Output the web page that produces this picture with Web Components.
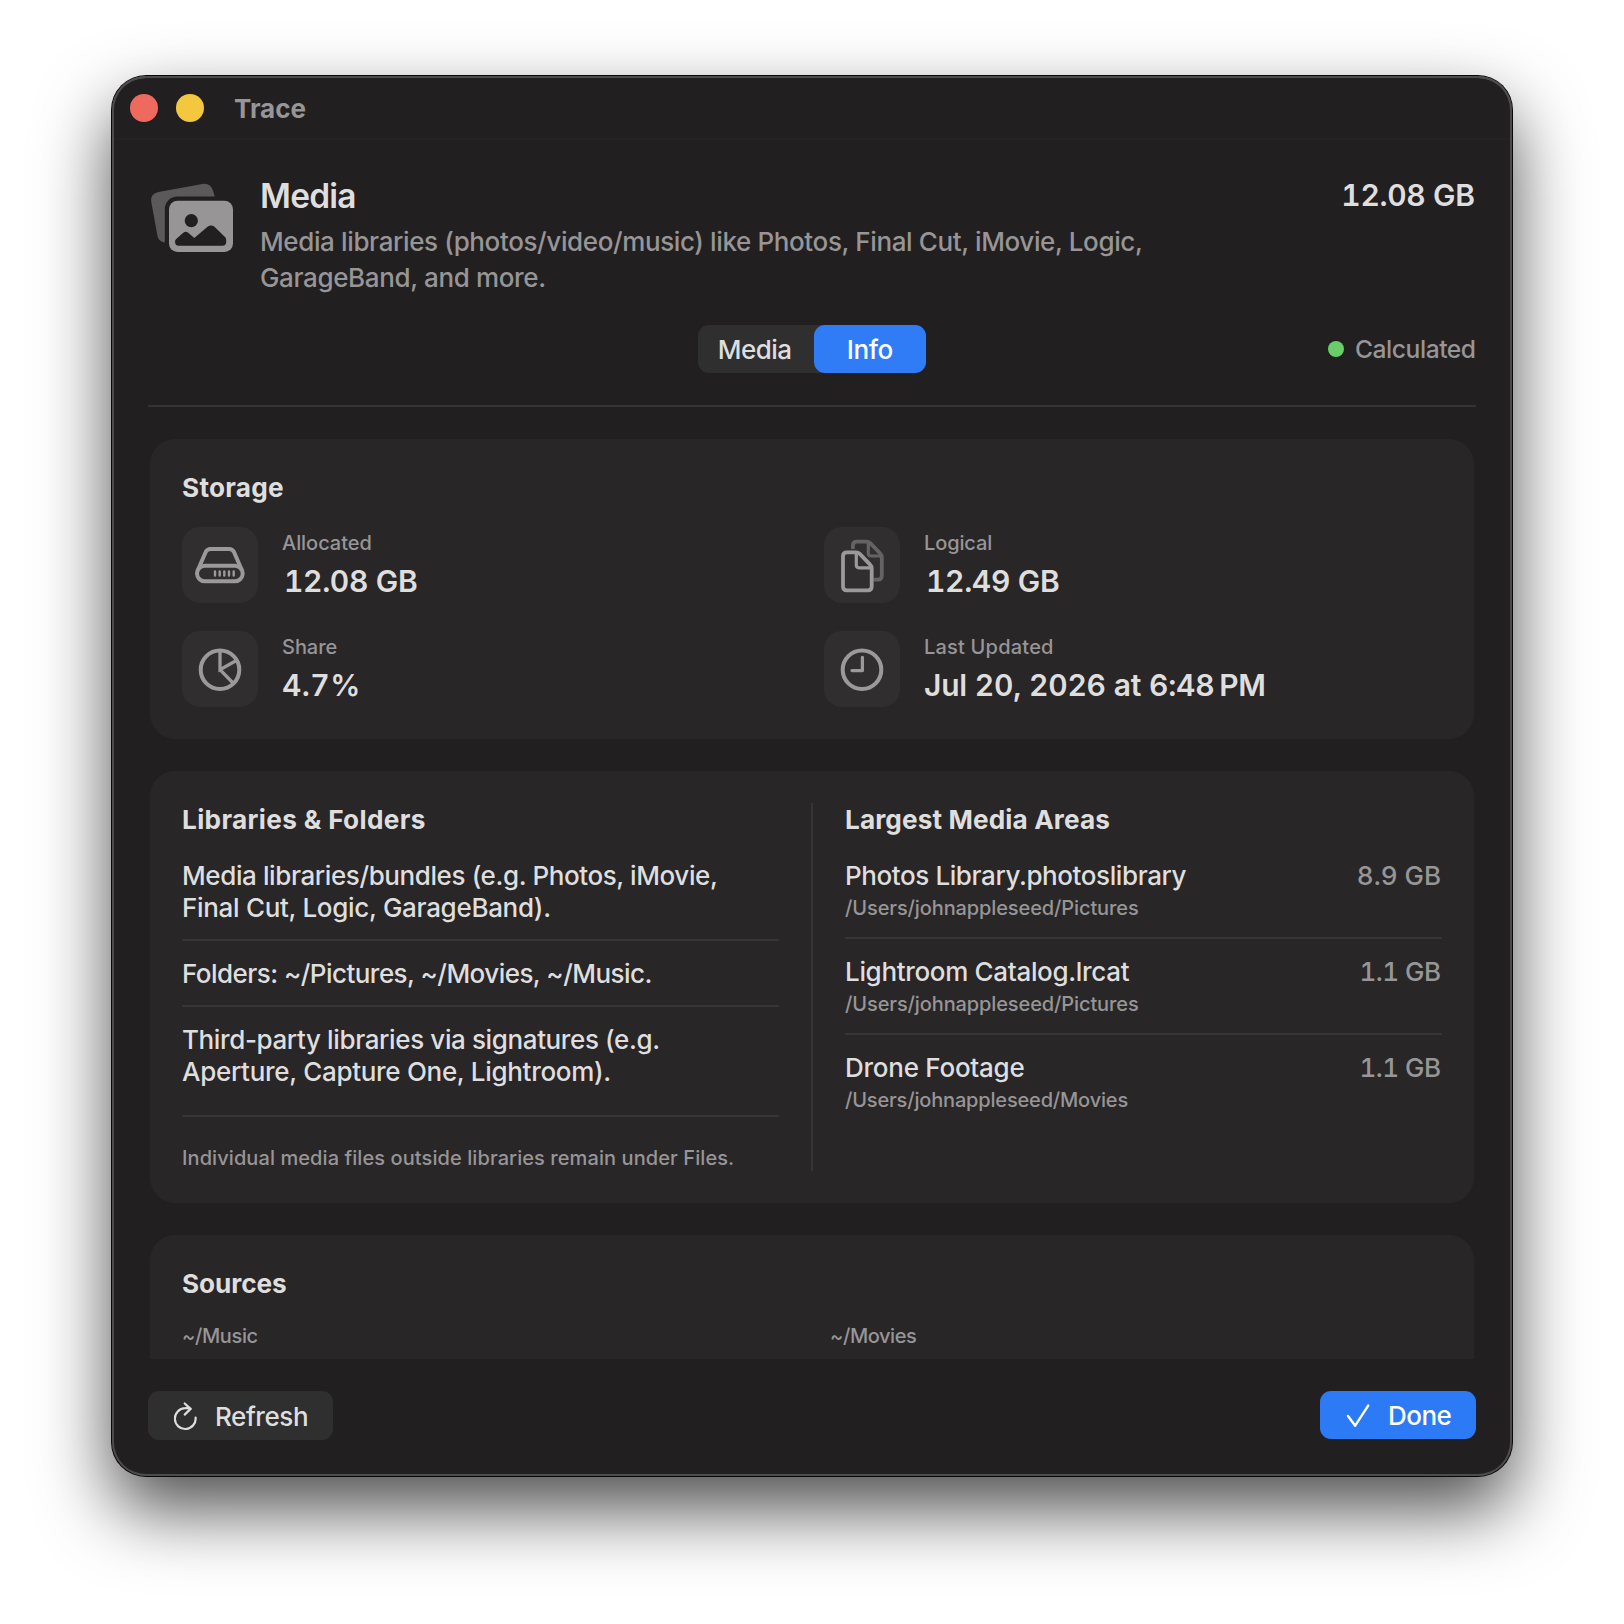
<!DOCTYPE html>
<html lang="en">
<head>
<meta charset="utf-8">
<title>Trace</title>
<style>
  html, body { margin: 0; background: #fff; }
  body {
    width: 1624px; height: 1624px; box-sizing: border-box; padding: 76px 112px; overflow: hidden;
    font-family: Inter, "Liberation Sans", sans-serif;
    --bg: #211f20; --card: #282627; --tile: #302e2f; --line: #373536;
    --hi: #dfdede; --lo: #979596; --blue: #2f7cf6;
    color: var(--hi);
  }
</style>
</head>
<body>
<trace-window heading="Trace">
  <trace-header slot="header">
    <trace-icon slot="icon" name="media" w="88" h="80"></trace-icon>
    <trace-text slot="title" kind="title" fit="92.5">Media</trace-text>
    <trace-text slot="desc" kind="desc" fit="879">Media libraries (photos/video/music) like Photos, Final Cut, iMovie, Logic,</trace-text>
    <trace-text slot="desc" kind="desc" fit="283">GarageBand, and more.</trace-text>
    <trace-text slot="size" kind="value" fit="131.7">12.08 GB</trace-text>
  </trace-header>
  <trace-toolbar slot="header">
    <trace-text slot="tab" kind="body" fit="70.5">Media</trace-text>
    <trace-text slot="active" kind="body" class="white" fit="43.5">Info</trace-text>
    <trace-text slot="status" kind="status" fit="118">Calculated</trace-text>
  </trace-toolbar>

  <trace-card>
    <trace-text kind="head" fit="100">Storage</trace-text>
    <trace-metrics>
      <trace-metric icon="drive"><trace-text slot="label" kind="small" fit="88">Allocated</trace-text><trace-text kind="value" class="num" fit="131.7">12.08 GB</trace-text></trace-metric>
      <trace-metric icon="docs"><trace-text slot="label" kind="small" fit="65.2">Logical</trace-text><trace-text kind="value" class="num" fit="131.7">12.49 GB</trace-text></trace-metric>
      <trace-metric icon="pie"><trace-text slot="label" kind="small" fit="53.4">Share</trace-text><trace-text kind="value" fit="74">4.7%</trace-text></trace-metric>
      <trace-metric icon="clock"><trace-text slot="label" kind="small" fit="126.5">Last Updated</trace-text><trace-text kind="value" fit="339.2">Jul 20, 2026 at 6:48&#x202f;PM</trace-text></trace-metric>
    </trace-metrics>
  </trace-card>

  <trace-card>
    <trace-split>
      <trace-list slot="left">
        <trace-text slot="head" kind="head" fit="241">Libraries &amp; Folders</trace-text>
        <div><trace-text kind="body" fit="532">Media libraries/bundles (e.g. Photos, iMovie,</trace-text><trace-text kind="body" fit="365.2">Final Cut, Logic, GarageBand).</trace-text></div>
        <div><trace-text kind="body" fit="466.5">Folders: ~/Pictures, ~/Movies, ~/Music.</trace-text></div>
        <div><trace-text kind="body" fit="475.5">Third-party libraries via signatures (e.g.</trace-text><trace-text kind="body" fit="427">Aperture, Capture One, Lightroom).</trace-text></div>
        <trace-text slot="note" kind="small" fit="549">Individual media files outside libraries remain under Files.</trace-text>
      </trace-list>
      <trace-list slot="right">
        <trace-text slot="head" kind="head" fit="262.5">Largest Media Areas</trace-text>
        <trace-area><trace-text kind="body" fit="339.2">Photos Library.photoslibrary</trace-text><trace-text slot="size" kind="body" class="dim" fit="81.7">8.9 GB</trace-text><trace-text slot="path" kind="small" fit="292.5">/Users/johnappleseed/Pictures</trace-text></trace-area>
        <trace-area><trace-text kind="body" fit="282.2">Lightroom Catalog.lrcat</trace-text><trace-text slot="size" kind="body" class="dim" fit="79.5">1.1 GB</trace-text><trace-text slot="path" kind="small" fit="292.5">/Users/johnappleseed/Pictures</trace-text></trace-area>
        <trace-area><trace-text kind="body" fit="176.6">Drone Footage</trace-text><trace-text slot="size" kind="body" class="dim" fit="79.5">1.1 GB</trace-text><trace-text slot="path" kind="small" fit="282">/Users/johnappleseed/Movies</trace-text></trace-area>
      </trace-list>
    </trace-split>
  </trace-card>

  <trace-card>
    <trace-text kind="head" fit="103.2">Sources</trace-text>
    <trace-sources>
      <trace-text kind="small" fit="73.8">~/Music</trace-text>
      <trace-text kind="small" fit="84.4">~/Movies</trace-text>
    </trace-sources>
  </trace-card>

  <trace-button slot="footer" icon="refresh"><trace-text kind="body" fit="89.7">Refresh</trace-text></trace-button>
  <trace-button slot="footer" icon="check" primary><trace-text kind="body" fit="60.7">Done</trace-text></trace-button>
</trace-window>

<script>
const define = (name, html, init) => {
  const tpl = document.createElement('template');
  tpl.innerHTML = html;
  customElements.define(name, class extends HTMLElement {
    constructor() {
      super();
      this.attachShadow({ mode: 'open' }).append(tpl.content.cloneNode(true));
    }
    connectedCallback() { if (init) init(this, this.shadowRoot); }
  });
};

const ICONS = {
  media: `<path fill="#5b595a" d="M3.2 21.5Q2.2 13.5 10.5 12L54.5 4Q62.5 2.8 65 10.5L66.8 16.7L66.8 22H22V62.5H16Q10.500 61 9.500 56Z"/>
    <rect x="16.800" y="16.600" width="75" height="62" rx="12.500" fill="#211f20"/>
    <rect x="21" y="20.700" width="64" height="51.300" rx="8.500" fill="#979596"/>
    <circle cx="43.300" cy="40.700" r="6.600" fill="#211f20"/>
    <path fill="#211f20" d="M27 61.500Q27 60 28.200 58.900L35.300 52.700Q37.800 50.800 40.200 52.700L46.300 58L59.800 46.600Q63 44.400 66.200 46.600L77 57Q78.200 58.200 78.200 59.800V62Q78.200 65.700 74.500 65.700H30.800Q27 65.700 27 61.500Z"/>`,
  drive: `<g fill="none" stroke="#9b999a" stroke-width="4"><rect x="15" y="38.800" width="45.700" height="15.500" rx="7.750"/>
    <path d="M15.700 43.500L23.600 25.300Q25 22 28.600 22H47.100Q50.700 22 52.100 25.300L60 43.500"/></g>
    <path stroke="#9b999a" stroke-width="2.400" stroke-linecap="round" d="M33 44.500v4M37.700 44.500v4M42.300 44.500v4M47 44.500v4M51.700 44.500v4"/>`,
  docs: `<g fill="none" stroke-width="3.800" stroke-linejoin="round">
    <g stroke="#656364"><path d="M28.900 22V18.500Q28.900 14.600 32.800 14.600H42.500Q44.700 14.600 46.300 16.200L56.200 26.500Q57.800 28.100 57.800 30.300V48.800Q57.800 52.700 53.900 52.700H49.500"/><path stroke-width="3.200" d="M44.300 15.500V26.200Q44.300 29 47.100 29H57"/></g>
    <path stroke="#9b999a" d="M19 29.200Q19 25.300 22.900 25.300H32Q34.200 25.300 35.800 26.900L46.100 37.600Q47.700 39.200 47.700 41.400V59.400Q47.700 63.300 43.800 63.300H22.900Q19 63.300 19 59.400Z"/>
    <path stroke="#9b999a" stroke-width="3.200" d="M32.300 26V38Q32.300 40.800 35.100 40.800H47"/></g>`,
  pie: `<g fill="none" stroke="#9b999a" stroke-width="4"><circle cx="38" cy="38.700" r="19.300"/><path stroke-width="3.300" d="M38 20V38.700L54.800 29.200M38 38.700L51.500 52.500"/></g>`,
  clock: `<g fill="none" stroke="#9b999a" stroke-width="4"><circle cx="38" cy="38.700" r="19.300"/><path stroke-width="3.300" stroke-linecap="round" stroke-linejoin="round" d="M38.400 26.500V39.600H28"/></g>`,
  refresh: `<g fill="none" stroke="#dfdede" stroke-width="2.200" stroke-linecap="round" stroke-linejoin="round"><path d="M21.600 16.600A10.400 10.400 0 1 1 11.200 7.200Q14 7 16.400 7.800"/><path d="M10.700 2.500L16.600 7.900L10.700 13.600"/></g>`,
  check: `<path fill="none" stroke="#fff" stroke-width="2.400" stroke-linecap="round" stroke-linejoin="round" d="M2 16L9.200 25.700L22.200 5.600"/>`
};

define('trace-icon', `<style>:host{display:block;flex:none}svg{display:block}</style>`, (el, root) => {
  const w = el.getAttribute('w'), h = el.getAttribute('h');
  if (!root.querySelector('svg'))
    root.innerHTML += `<svg width="${w}" height="${h}" viewBox="0 0 ${w} ${h}">${ICONS[el.getAttribute('name')]}</svg>`;
});

define('trace-window', `<style>
  :host { display: flex; flex-direction: column; position: relative; box-sizing: border-box; width: 1400px; height: 1400px;
    background: var(--bg); border-radius: 34px; box-shadow: 0 0 0 1px #080808, 0 33px 72px rgba(0,0,0,.7); }
  :host::after { content: ""; position: absolute; inset: 0; border-radius: 34px; box-shadow: inset 0 0 0 2px #4d4b4c, inset 0 2px 0 0 #6a6869; pointer-events: none; }
  .bar { display: flex; align-items: center; height: 64px; box-sizing: border-box; padding: 2px 18px 0; border-bottom: 2px solid #242223; }
  .dot { width: 28px; height: 28px; border-radius: 50%; margin-right: 18px; }
  .red { background: #ee6a5f; } .yellow { background: #f3c83f; }
  .bar trace-text { margin-left: 12px; }
  .head { padding: 36px 36px 0; }
  .scroll { height: 952px; box-sizing: border-box; padding: 32px 38px 0; display: flex; flex-direction: column; gap: 32px; overflow: hidden; flex: none; }
  .foot { display: flex; justify-content: space-between; align-items: flex-start; padding: 32px 36px 0; }
</style>
<div class="bar"><span class="dot red"></span><span class="dot yellow"></span><trace-text kind="bar" fit="70.3">Trace</trace-text></div>
<div class="head"><slot name="header"></slot></div>
<div class="scroll"><slot></slot></div>
<div class="foot"><slot name="footer"></slot></div>`);

define('trace-header', `<style>
  :host { display: flex; height: 120px; }
  .icon { padding-top: 4px; width: 112px; flex: none; }
  .text { display: flex; flex-direction: column; flex: 1; }
  .desc { padding-top: 8px; }
  .size { padding-right: 1px; }
</style>
<div class="icon"><slot name="icon"></slot></div>
<div class="text"><slot name="title"></slot><div class="desc"><slot name="desc"></slot></div></div>
<div class="size"><slot name="size"></slot></div>`);

define('trace-toolbar', `<style>
  :host { display: grid; grid-template-columns: 1fr auto 1fr; align-items: center; margin-top: 29px; padding-bottom: 32px; border-bottom: 2px solid #353334; }
  .picker { grid-column: 2; display: flex; height: 48px; background: #302f30; border-radius: 11px; }
  .seg { display: flex; align-items: center; justify-content: center; box-sizing: border-box; width: 116px; padding-right: 2px; }
  .seg.on { width: 112px; padding: 0; background: var(--blue); border-radius: 11px; }
  .status { display: flex; align-items: center; justify-content: flex-end; gap: 11px; }
  .status i { width: 16px; height: 16px; border-radius: 50%; background: #68ce67; }
</style>
<div class="picker"><div class="seg"><slot name="tab"></slot></div><div class="seg on"><slot name="active"></slot></div></div>
<div class="status"><i></i><slot name="status"></slot></div>`);

define('trace-card', `<style>
  :host { display: block; flex: none; background: var(--card); border-radius: 25px; padding: 32px; }
</style><slot></slot>`);

define('trace-metrics', `<style>
  :host { display: grid; grid-template-columns: 1fr 1fr; gap: 28px 24px; margin-top: 24px; }
</style><slot></slot>`);

define('trace-metric', `<style>
  :host { display: flex; gap: 24px; align-items: center; height: 76px; }
  .tile { width: 76px; height: 76px; border-radius: 18px; background: var(--tile); }
  .text { display: flex; flex-direction: column; gap: 6px; }
</style>
<div class="tile"></div><div class="text"><slot name="label"></slot><slot></slot></div>`, (el, root) => {
  root.querySelector('.tile').innerHTML = `<trace-icon name="${el.getAttribute('icon')}" w="76" h="76"></trace-icon>`;
});

define('trace-split', `<style>
  :host { display: grid; grid-template-columns: 1fr 2px 1fr; column-gap: 32px; height: 368px; }
  .rule { background: var(--line); }
</style><slot name="left"></slot><div class="rule"></div><slot name="right"></slot>`);

define('trace-list', `<style>
  :host { display: block; }
  .items { margin-top: 24px; }
  ::slotted(:not([slot]):not(:first-of-type)) { border-top: 2px solid var(--line); margin-top: 16px; padding-top: 16px; }
  .note { margin-top: 28px; padding-top: 28px; border-top: 2px solid var(--line); }
</style><slot name="head"></slot><div class="items"><slot></slot></div>`, (el, root) => {
  if (el.querySelector('[slot=note]') && !root.querySelector('.note'))
    root.querySelector('.items').insertAdjacentHTML('afterend', '<div class="note"><slot name="note"></slot></div>');
});

define('trace-area', `<style>
  :host { display: flex; flex-direction: column; gap: 4px; }
  .row { display: flex; justify-content: space-between; padding-right: 1px; }
</style><div class="row"><slot></slot><slot name="size"></slot></div><slot name="path"></slot>`);

define('trace-sources', `<style>
  :host { display: grid; grid-template-columns: 1fr 1fr; column-gap: 36px; margin-top: 24px; height: 60px; }
</style><slot></slot>`);

define('trace-button', `<style>
  :host { display: flex; align-items: center; box-sizing: border-box; height: 49px; width: 185px; padding-left: 26px; gap: 17px; border-radius: 11px; background: #302f30; }
  :host([primary]) { width: 156px; height: 48px; gap: 18px; background: #2c7af5; --hi: #fff; }
</style><div class="icon"></div><slot></slot>`, (el, root) => {
  root.querySelector('.icon').innerHTML = `<trace-icon name="${el.getAttribute('icon')}" w="24" h="30"></trace-icon>`;
});

/* A label. The "fit" attribute is the width in px that its glyphs span; tracking is derived from it. */
define('trace-text', `<style>
  :host { display: block; white-space: pre; font-size: 26px; line-height: 32px; color: var(--hi); font-weight: 460; padding-top: 1px; margin-bottom: -1px; }
  :host([kind=title]) { font-size: 33.5px; line-height: 39px; font-weight: 630; padding: 1px 0 0; margin: 0; }
  :host([kind=desc]) { line-height: 36px; color: var(--lo); padding: 0; margin: 0; }
  :host([kind=value]) { font-size: 30px; line-height: 38px; font-weight: 630; font-variant-numeric: tabular-nums; padding: 0; margin: 0; }
  :host(.num) { padding-left: 2px !important; }
  :host([kind=status]) { font-size: 24.6px; color: var(--lo); padding: 0; margin: 0; }
  :host([kind=head]) { font-size: 26.2px; font-weight: 720; }
  :host([kind=small]) { font-size: 20px; line-height: 26px; color: var(--lo); padding: 0; margin: 0; }
  :host([kind=bar]) { font-size: 26px; font-weight: 700; color: var(--lo); }
  :host(.dim) { color: var(--lo); font-variant-numeric: tabular-nums; }
  :host(.white) { color: #fff; }
</style><slot></slot>`, el => {
  const text = el.textContent, cs = getComputedStyle(el);
  const range = document.createRange();
  range.selectNodeContents(el);
  const advance = range.getBoundingClientRect().width;
  const ctx = document.createElement('canvas').getContext('2d');
  const size = parseFloat(cs.fontSize);
  ctx.font = `${cs.fontWeight} ${size * 10}px Inter`;
  const first = ctx.measureText(text[0]), last = ctx.measureText(text.at(-1));
  const bearings = (-first.actualBoundingBoxLeft + last.width - last.actualBoundingBoxRight) / 10;
  const tracking = (parseFloat(el.getAttribute('fit')) - advance + bearings) / (text.length - 1);
  el.style.letterSpacing = tracking.toFixed(3) + 'px';
  el.style.marginRight = (-tracking).toFixed(3) + 'px';
});
</script>
</body>
</html>
